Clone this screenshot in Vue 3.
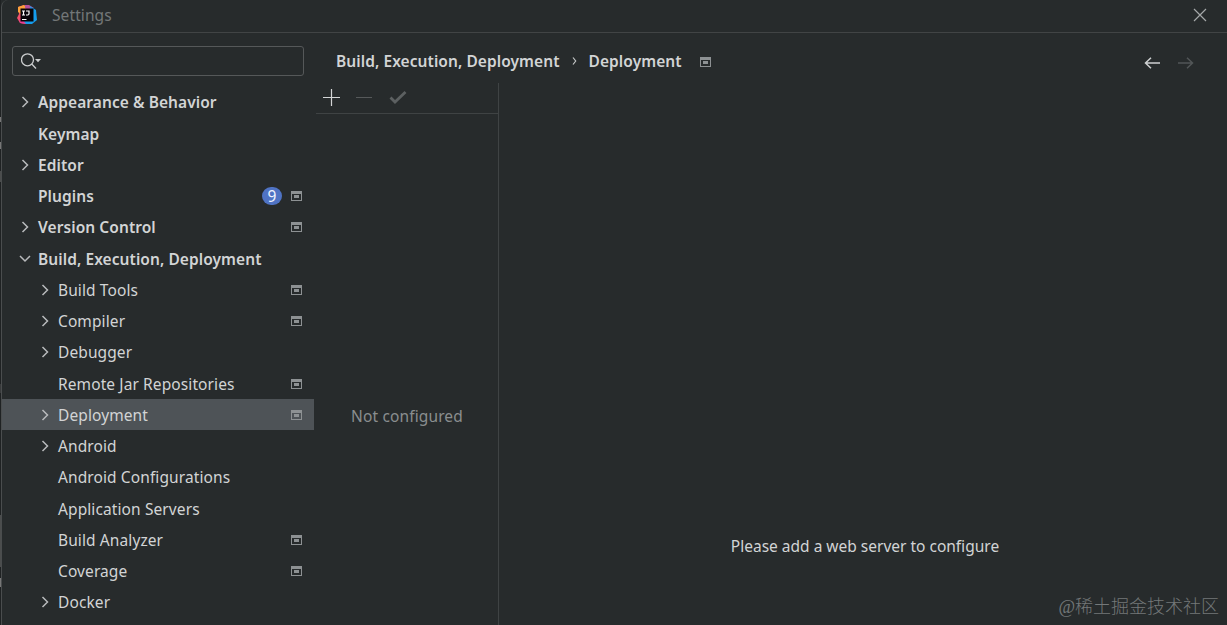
<script setup>
const items = [
  { t: 'Appearance & Behavior', a: 'r' },
  { t: 'Keymap' },
  { t: 'Editor', a: 'r' },
  { t: 'Plugins', n: 9, p: true },
  { t: 'Version Control', a: 'r', p: true },
  { t: 'Build, Execution, Deployment', a: 'd' },
  { t: 'Build Tools', sub: true, a: 'r', p: true },
  { t: 'Compiler', sub: true, a: 'r', p: true },
  { t: 'Debugger', sub: true, a: 'r' },
  { t: 'Remote Jar Repositories', sub: true, p: true },
  { t: 'Deployment', sub: true, a: 'r', p: true, sel: true },
  { t: 'Android', sub: true, a: 'r' },
  { t: 'Android Configurations', sub: true },
  { t: 'Application Servers', sub: true },
  { t: 'Build Analyzer', sub: true, p: true },
  { t: 'Coverage', sub: true, p: true },
  { t: 'Docker', sub: true, a: 'r' },
]
</script>

<template>
  <div class="screen">
    <div class="edge"><i class="e1"></i><i class="e2"></i><i class="e3"></i><i class="e4"></i><i class="e5"></i><i class="e6"></i></div>
    <div class="window">
      <header class="titlebar">
        <svg class="logo" width="20" height="20" viewBox="0 0 20 20">
          <path d="M1 2 7 0 13 4 8 19 3 18 0 13 2 9Z" fill="#f4506a" />
          <path d="M1 2 7 0 10 3 4 9 1 7Z" fill="#fda13c" />
          <path d="M8 0 12 0 17 3 12 6 8 3Z" fill="#b4509c" />
          <path d="M13 1 19 5 20 15 15 19 8 19 5 16 15 15Z" fill="#159cec" />
          <path d="M2 14 6 15 9 19 3 18Z" fill="#e93b91" />
          <rect x="3.5" y="3.5" width="13" height="13" fill="#080509" />
          <path d="M5 6H8M6.5 6V10M5 10H8M9 6H12V8.8Q12 10 10.8 10H9M5 14.5H9.5" fill="none" stroke="#fff" stroke-width="1.2" />
        </svg>
        <span class="title">Settings</span>
        <svg class="close" width="14" height="14" viewBox="0 0 14 14"><path d="M1 1 13 13M13 1 1 13" /></svg>
      </header>
      <div class="body">
        <aside class="side">
          <div class="search">
            <svg width="22" height="18" viewBox="0 0 22 18">
              <circle cx="6.5" cy="6.8" r="6" /><path d="M10.7 11 15 15.5" /><path class="solid" d="M14 6.1H20L17 9.3Z" />
            </svg>
          </div>
          <ul class="tree">
            <li v-for="i in items" :key="i.t" :class="{ sub: i.sub, sel: i.sel }">
              <span class="arrow">
                <svg v-if="i.a === 'r'" width="12" height="12" viewBox="0 0 12 12"><path d="M3.5 1 8.5 6 3.5 11" /></svg>
                <svg v-if="i.a === 'd'" width="12" height="12" viewBox="0 0 12 12"><path d="M1 3 6 8 11 3" /></svg>
              </span>
              <span class="label">{{ i.t }}</span>
              <span v-if="i.n" class="badge">{{ i.n }}</span>
              <svg v-if="i.p" class="proj" width="11" height="10" viewBox="0 0 11 10"><path fill-rule="evenodd" d="M0 0H11V10H0ZM1 3V9H10V3ZM3 4H8V7H3Z" /></svg>
            </li>
          </ul>
        </aside>
        <main class="main">
          <div class="crumbs">
            <span class="c1">Build, Execution, Deployment</span>
            <svg class="sep" width="5" height="8" viewBox="0 0 5 8"><path d="M1 .5 3.7 4 1 7.5" /></svg>
            <span class="c2">Deployment</span>
            <svg class="proj" width="11" height="10" viewBox="0 0 11 10"><path fill-rule="evenodd" d="M0 0H11V10H0ZM1 3V9H10V3ZM3 4H8V7H3Z" /></svg>
            <svg class="nav" width="50" height="12" viewBox="0 0 50 12">
              <path d="M1.5 6H16M7 .8 1.5 6 7 11.2" /><path class="off" d="M34 6H48.5M43 .8 48.5 6 43 11.2" />
            </svg>
          </div>
          <div class="panes">
            <section class="servers">
              <div class="tools">
                <svg width="84" height="18" viewBox="0 0 84 18">
                  <path class="plus" d="M0 9.5H17M8.5 1V18" /><path class="minus" d="M33 9.5H49" /><path class="check" d="M67.5 9.5 72 14 82.5 4" />
                </svg>
              </div>
              <div class="empty"><span>Not configured</span></div>
            </section>
            <section class="detail"><span>Please add a web server to configure</span></section>
          </div>
        </main>
      </div>
    </div>
    <div class="mark">@稀土掘金技术社区</div>
  </div>
</template>

<style>
body { background: #272b2c; overflow: hidden; }
</style>
<style scoped>
* { box-sizing: border-box; }
.screen { position: relative; display: flex; width: 1227px; height: 625px; overflow: hidden; background: #272b2c; color: #d2d4d5; font: 15.5px/20px "Noto Sans", "Open Sans", sans-serif; }
svg { display: block; flex: none; fill: none; }
.edge { position: relative; width: 1px; background: #1f2223; }
.edge i { position: absolute; left: 0; width: 1px; background: #777; }
.e1 { top: 117px; height: 5px; }
.e2 { top: 142px; height: 7px; }
.e3 { top: 171px; height: 11px; opacity: .5; }
.e4 { top: 384px; height: 9px; opacity: .3; }
.e5 { top: 515px; height: 52px; opacity: .5; }
.e6 { top: 578px; height: 9px; }
.window { flex: 1; display: flex; flex-direction: column; border-left: 1px solid #4a4d4e; border-top-left-radius: 7px; }
.titlebar { height: 33px; border-bottom: 1px solid #414445; display: flex; align-items: center; padding: 0 20px 3px 15px; }
.title { color: #737778; margin-left: 15px; flex: 1; letter-spacing: .1px; }
.close path { stroke: #a5a8a9; stroke-width: 1.2; }
.body { flex: 1; display: flex; min-height: 0; }
.side { width: 312px; flex: none; }
.search { margin: 13px 0 0 10px; width: 292px; height: 30px; border: 1px solid #555859; border-radius: 3px; padding: 6px 8px; }
.search path, .search circle { stroke: #cccecf; stroke-width: 1.3; }
.search .solid { fill: #cccecf; stroke: none; }
.tree { list-style: none; padding: 0; margin: 10.7px 0 0; }
li { height: 31.25px; display: flex; align-items: center; padding: 0 12px 0 17px; font-weight: 600; letter-spacing: .07px; }
li.sub { padding-left: 37px; font-weight: 400; letter-spacing: .1px; }
li.sel { background: #4e5357; }
.arrow { width: 12px; margin-right: 7px; }
.arrow path { stroke: #b8babc; stroke-width: 1.5; }
.label { flex: 1; white-space: nowrap; }
.badge { width: 20px; height: 18px; border-radius: 9px; background: #4f73c4; color: #eef3ff; font: 15.5px/18px "Noto Sans", sans-serif; text-align: center; margin-right: 9px; }
.proj path { fill: #8d9193; }
.main { flex: 1; display: flex; flex-direction: column; margin-left: 2px; }
.crumbs { height: 50px; display: flex; align-items: center; padding: 7px 33px 1px 20px; font-weight: 600; letter-spacing: .07px; }
.crumbs .c1, .crumbs .c2 { white-space: nowrap; }
.sep { margin: 0 12px; }
.sep path { stroke: #c5c7c8; stroke-width: 1.2; }
.crumbs .proj { margin: 2px 0 0 18px; }
.nav { margin: 3px 0 0 auto; }
.nav path { stroke: #ced0d1; stroke-width: 1.5; }
.nav .off { stroke: #525657; }
.panes { flex: 1; display: flex; }
.servers { width: 183px; border-right: 1px solid #3f4344; display: flex; flex-direction: column; }
.tools { height: 31px; border-bottom: 1px solid #3f4344; padding: 5px 7px; }
.plus { stroke: #d3d5d6; stroke-width: 1.2; }
.minus { stroke: #56595a; }
.check { stroke: #5c6061; stroke-width: 2.8; }
.empty { text-align: center; padding-top: 292px; color: #8a8e8f; letter-spacing: .13px; }
.detail { flex: 1; text-align: center; padding: 453px 0 0 4px; }
.mark { position: absolute; right: 8px; bottom: 6px; color: #747879; font: 300 18px/24px "Liberation Serif", "Noto Sans CJK SC", serif; white-space: nowrap; }
</style>
